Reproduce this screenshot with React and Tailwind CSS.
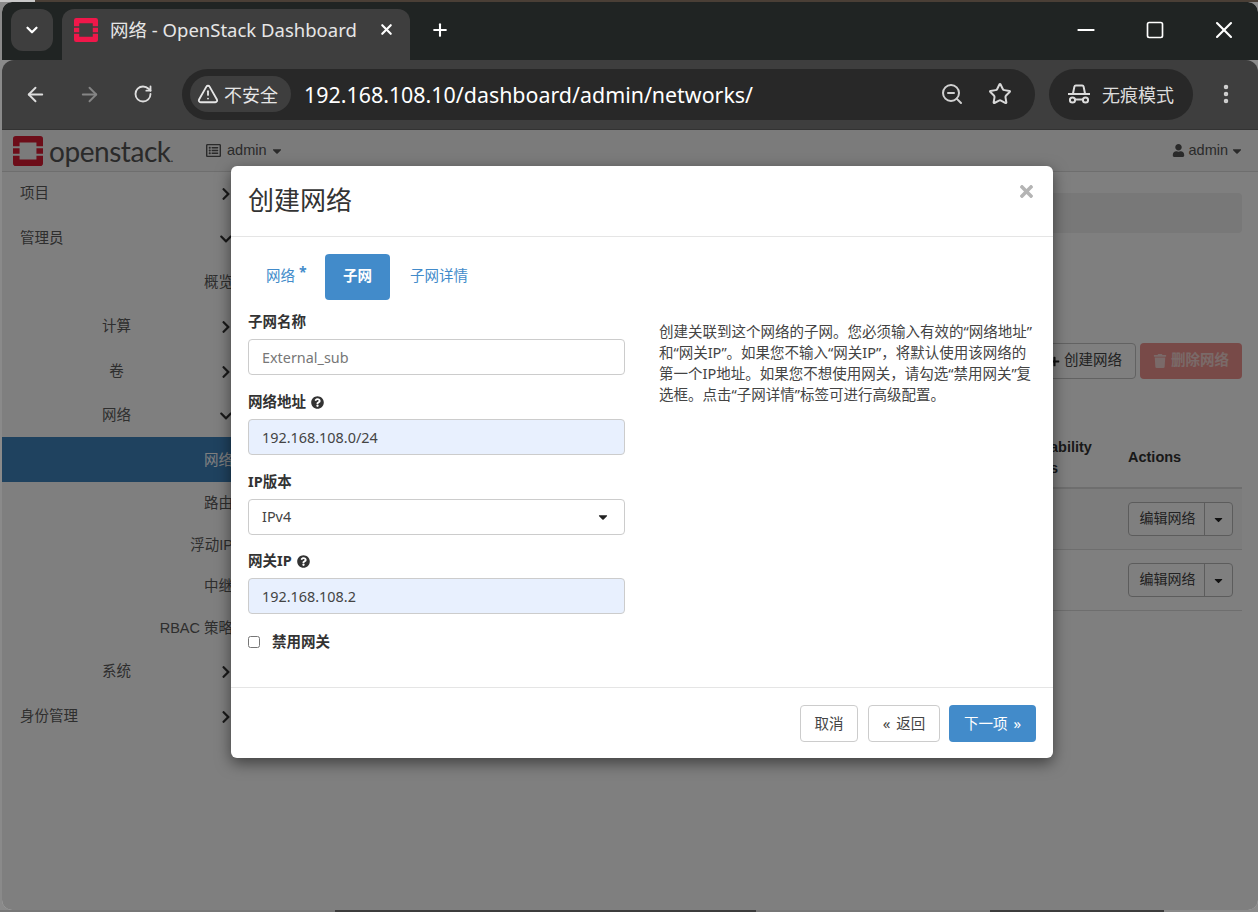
import { ArrowLeft, ArrowRight, ChevronDown, EllipsisVertical, Minus, Plus, RotateCw, Square, Star, TriangleAlert, X, ZoomOut } from 'lucide-react'
import { FaCaretDown, FaChevronDown, FaChevronRight, FaPlus, FaQuestionCircle, FaRegListAlt, FaTimes, FaTrash, FaUser } from 'react-icons/fa'

const sans = 'font-["Noto_Sans","Noto_Sans_CJK_SC",sans-serif]'

function StackMark({ className }) {
  return (
    <svg viewBox="0 0 32 32" className={className}>
      <path fill="currentColor" d="M3 0h26a3 3 0 0 1 3 3v8h-7V7H7v4H0V3a3 3 0 0 1 3-3zM0 13h7v6H0zM25 13h7v6h-7zM0 21h7v4h18v-4h7v8a3 3 0 0 1-3 3H3a3 3 0 0 1-3-3z" />
    </svg>
  )
}

function IncognitoIcon() {
  return (
    <svg viewBox="0 0 22 20" className="w-[22px] h-[20px] text-[#dcdcdc]" fill="none" stroke="currentColor" strokeWidth="2">
      <path d="M5 9.5 6.4 2.6A1.5 1.5 0 0 1 7.9 1.4h6.2a1.5 1.5 0 0 1 1.5 1.2L17 9.5" />
      <path d="M0 10h22" />
      <circle cx="4.5" cy="16" r="2.6" />
      <circle cx="17.5" cy="16" r="2.6" />
      <path d="M7 15.5h8" />
    </svg>
  )
}

function BrowserChrome() {
  return (
    <div className={`${sans} shrink-0`}>
      <div className="h-[58px] bg-[#202423] rounded-t-[10px] flex items-start pt-[7px] pl-[9px]">
        <div className="w-[42px] h-[42px] rounded-xl bg-[#3e3e3e] flex items-center justify-center text-white">
          <ChevronDown size={18} strokeWidth={3} />
        </div>
        <div className="ml-[9px] w-[348px] h-[51px] rounded-t-xl bg-[#3e3e3e] flex items-center pl-3 pr-[15px] pb-[10px] text-[#e6e6e6]">
          <StackMark className="w-[24px] h-[24px] text-[#f0174a]" />
          <span className="ml-[12px] flex-1 text-[18.5px] whitespace-nowrap">网络 - OpenStack Dashboard</span>
          <X size={17} strokeWidth={3} className="text-white" />
        </div>
        <Plus size={20} strokeWidth={2.5} className="ml-[20px] mt-[11px] text-white" />
        <div className="ml-auto mr-[20px] flex items-center mt-[7px] text-white">
          <Minus size={26} strokeWidth={2} />
          <Square size={20} strokeWidth={2} className="ml-[46px]" />
          <X size={28} strokeWidth={1.8} className="ml-[45px]" />
        </div>
      </div>
      <div className="h-[70px] bg-[#3e3e3e] rounded-t-xl border-b border-[#333] flex items-center pl-[22px] pr-[20px] pb-[1px]">
        <ArrowLeft size={23} strokeWidth={2} className="text-[#dedede]" />
        <ArrowRight size={23} strokeWidth={2} className="ml-[31px] text-[#858585]" />
        <RotateCw size={20} strokeWidth={2.2} className="ml-[32px] text-[#dedede]" />
        <div className="ml-[29px] w-[853px] h-[51px] rounded-full bg-[#282828] flex items-center pl-2 pr-[23px]">
          <div className="w-[101px] h-[36px] rounded-full bg-[#3e3e3e] flex items-center pl-[7px] text-[#e6e6e6]">
            <TriangleAlert size={22} strokeWidth={2} />
            <span className="ml-[5px] pt-[3px] text-[18px]">不安全</span>
          </div>
          <span className="ml-[13px] flex-1 pt-[2px] text-[21.4px] text-white whitespace-nowrap">192.168.108.10/dashboard/admin/networks/</span>
          <ZoomOut size={24} strokeWidth={2} className="text-[#d0d0d0]" />
          <Star size={24} strokeWidth={2} className="ml-[24px] text-[#d8d8d8]" />
        </div>
        <div className="ml-[14px] w-[144px] h-[51px] rounded-full bg-[#282828] flex items-center pl-[19px] text-[#dcdcdc]">
          <IncognitoIcon />
          <span className="ml-[12px] pt-[3px] text-[18px]">无痕模式</span>
        </div>
        <EllipsisVertical size={24} strokeWidth={2.5} className="ml-auto text-[#d0d0d0]" />
      </div>
    </div>
  )
}

function SideRow({ level = 0, label, open, closed, active, narrow }) {
  const chevron = open ? <FaChevronDown size={14} /> : closed ? <FaChevronRight size={14} /> : null
  return (
    <div className={`${narrow ? 'h-[41.8px]' : 'h-[44.4px]'} w-[231px] pt-[2px] grid grid-cols-[1fr_auto_1fr] items-center text-[14.5px] ${active ? 'bg-[#3e84bf] text-white' : 'text-[#5c5c5c]'}`}>
      {level === 0 && <span className="pl-[18px] col-span-2 whitespace-nowrap">{label}</span>}
      {level === 1 && <><span /><span className="-translate-x-[1px] whitespace-nowrap">{label}</span></>}
      {level === 2 && <span className="col-span-3 text-right whitespace-nowrap">{label}</span>}
      {level !== 2 && <span className="justify-self-end text-[#333]">{chevron}</span>}
    </div>
  )
}

function Sidebar() {
  return (
    <aside className="w-[231px] shrink-0 -mt-[1px]">
      <SideRow label="项目" closed />
      <SideRow label="管理员" open />
      <SideRow level={2} label="概览" />
      <SideRow level={1} label="计算" closed />
      <SideRow level={1} label="卷" closed />
      <SideRow level={1} label="网络" open />
      <SideRow level={2} label="网络" active />
      <SideRow level={2} label="路由" narrow />
      <SideRow level={2} label="浮动IP" narrow />
      <SideRow level={2} label="中继" narrow />
      <SideRow level={2} label="RBAC 策略" narrow />
      <SideRow level={1} label="系统" closed />
      <SideRow label="身份管理" closed />
    </aside>
  )
}

function RowActions() {
  return (
    <div className="ml-auto flex w-[105px] h-[34px] border border-[#b9b9b9] rounded bg-[#fff] text-[14px] text-[#444]">
      <span className="flex-1 flex items-center justify-center pl-[2px] pb-[2px] border-r border-[#b9b9b9]">编辑网络</span>
      <span className="w-[27px] flex items-center justify-center text-[#222]"><FaCaretDown size={13} /></span>
    </div>
  )
}

function Main() {
  return (
    <main className="flex-1 pr-[16px] flex flex-col items-stretch pt-[21px]">
      <div className="h-[40px] bg-[#f0f0f0] rounded" />
      <div className="mt-[110px] flex justify-end gap-1">
        <div className="h-[36px] pl-3 pr-[13px] flex items-center gap-1 border border-[#c4c4c4] rounded bg-white text-[14.5px] text-[#444]">
          <FaPlus size={11} className="text-[#222]" />
          <span>创建网络</span>
        </div>
        <div className="h-[36px] w-[102px] flex items-center justify-center gap-1 rounded bg-[#f09490] text-[14.5px] font-bold text-[#f4d4d2]">
          <FaTrash size={14} />
          <span>删除网络</span>
        </div>
      </div>
      <div className="mt-[50px] h-[60px] pb-[1px] flex items-center border-b-2 border-[#ddd] text-[14.5px] font-bold text-[#333]">
        <span className="ml-auto w-[64px] leading-[21px] whitespace-nowrap">ability<br />s</span>
        <span className="ml-[14px] w-[114px]">Actions</span>
      </div>
      <div className="h-[61px] bg-[#f9f9f9] border-b border-[#ddd] flex items-center pr-[9px]"><RowActions /></div>
      <div className="h-[61px] border-b border-[#ddd] flex items-center pr-[9px]"><RowActions /></div>
    </main>
  )
}

function Label({ children, help }) {
  return (
    <div className="flex items-center gap-[5px] h-[20px] mb-[7px] text-[14.5px] font-bold text-[#333] whitespace-nowrap">
      {children}
      {help && <FaQuestionCircle size={13} />}
    </div>
  )
}

function Field({ value, filled, placeholder }) {
  return (
    <input
      readOnly
      value={value}
      placeholder={placeholder}
      className={`block w-full h-[36px] pl-[13px] pr-[14px] border border-[#ccc] rounded text-[14.4px] text-[#444] placeholder:text-[#777] ${filled ? 'bg-[#e8f0fe]' : 'bg-white'}`}
    />
  )
}

function Modal() {
  return (
    <div className={`${sans} absolute left-[229px] top-[36px] w-[822px] h-[592px] bg-white rounded-md shadow-[0_5px_15px_rgba(0,0,0,0.5)] flex flex-col text-[#333]`}>
      <div className="h-[71px] shrink-0 border-b border-[#e5e5e5] pl-[17px] pr-[17px] pb-[2px] flex items-center justify-between">
        <h4 className="text-[26px] text-[#333]">创建网络</h4>
        <FaTimes size={19} className="text-[#b4b4b4] -mt-[18px]" />
      </div>
      <div className="flex-1 px-[17px] pt-[17px] min-h-0">
        <div className="flex text-[14.5px] text-[#428bca] h-[46px]">
          <div className="w-[74px] flex items-center pl-[18px] pb-[2px]">网络<span className="ml-[4px] -mt-[9px] text-[14px] font-bold">*</span></div>
          <div className="ml-[3px] w-[65px] rounded bg-[#428bca] text-white font-bold flex items-center justify-center pb-[2px]">子网</div>
          <div className="ml-[20px] flex items-center pb-[2px]">子网详情</div>
        </div>
        <div className="flex gap-[34px] mt-[12px]">
          <div className="w-[377px] shrink-0">
            <Label>子网名称</Label>
            <Field value="" placeholder="External_sub" />
            <div className="mt-[17px]"><Label help>网络地址</Label></div>
            <Field value="192.168.108.0/24" filled />
            <div className="mt-[17px]"><Label>IP版本</Label></div>
            <div className="h-[36px] pl-[13px] pr-[14px] border border-[#ccc] rounded flex items-center justify-between text-[14.4px] text-[#444]">
              <span>IPv4</span>
              <FaCaretDown size={14} className="text-[#222]" />
            </div>
            <div className="mt-[16px]"><Label help>网关IP</Label></div>
            <Field value="192.168.108.2" filled />
            <label className="mt-[18px] flex items-center h-[20px] text-[14.5px] font-bold">
              <input type="checkbox" className="w-[12px] h-[12px] m-0" />
              <span className="ml-[12px]">禁用网关</span>
            </label>
          </div>
          <p className="text-[14.5px] leading-[21.2px] text-[#444] mt-[8.5px] whitespace-nowrap">
            创建关联到这个网络的子网。您必须输入有效的“网络地址”<br />
            和“网关IP”。如果您不输入“网关IP”，将默认使用该网络的<br />
            第一个IP地址。如果您不想使用网关，请勾选“禁用网关”复<br />
            选框。点击“子网详情”标签可进行高级配置。
          </p>
        </div>
      </div>
      <div className="h-[71px] shrink-0 border-t border-[#e5e5e5] pr-[17px] flex items-start justify-end pt-[17px] text-[14.5px]">
        <div className="w-[58px] h-[37px] border border-[#ccc] rounded flex items-center justify-center text-[#444]">取消</div>
        <div className="ml-[10px] w-[72px] h-[37px] border border-[#ccc] rounded flex items-center justify-center gap-[6px] text-[#444]"><span className="text-[15px]">«</span>返回</div>
        <div className="ml-[9px] w-[87px] h-[37px] rounded bg-[#428bca] text-white flex items-center justify-center gap-[6px]">下一项<span className="text-[15px]">»</span></div>
      </div>
    </div>
  )
}

export default function App() {
  return (
    <div className="w-[1258px] h-[912px] overflow-hidden bg-[#8a8a8a] flex flex-col">
      <div className="h-[2px] shrink-0 flex bg-[#4a3f36]">
        <div className="w-[35px] bg-[#c8c8c8]" />
      </div>
      <div className="h-[908px] ml-[2px] rounded-[10px] overflow-hidden flex flex-col shrink-0">
        <BrowserChrome />
        <div className="relative flex-1 min-h-0 bg-white font-['Liberation_Sans','Noto_Sans_CJK_SC',sans-serif]">
          <header className="h-[42px] bg-[#f6f6f6] border-b border-[#ddd] flex items-center text-[14.5px] text-[#555]">
            <StackMark className="ml-[11px] w-[30px] h-[30px] text-[#da1a32]" />
            <span className="ml-[6px] text-[28px] tracking-[-0.45px] text-[#555] leading-none font-['Lato']">openstack<span className="text-[12px]">.</span></span>
            <FaRegListAlt size={15} className="ml-[33px]" />
            <span className="ml-[6px]">admin</span>
            <FaCaretDown size={14} className="ml-[3px]" />
            <FaUser size={13} className="ml-auto" />
            <span className="ml-[4px]">admin</span>
            <FaCaretDown size={14} className="ml-[2px] mr-[14px]" />
          </header>
          <div className="flex">
            <Sidebar />
            <Main />
          </div>
          <div className="absolute inset-0 bg-black/50" />
          <Modal />
        </div>
      </div>
      <div className="h-[2px] shrink-0 flex">
        <div className="w-[335px] bg-[#777]" />
        <div className="w-[421px] bg-[#3c3c3c]" />
        <div className="w-[234px] bg-[#777]" />
        <div className="w-[174px] bg-[#3c3c3c]" />
      </div>
    </div>
  )
}
